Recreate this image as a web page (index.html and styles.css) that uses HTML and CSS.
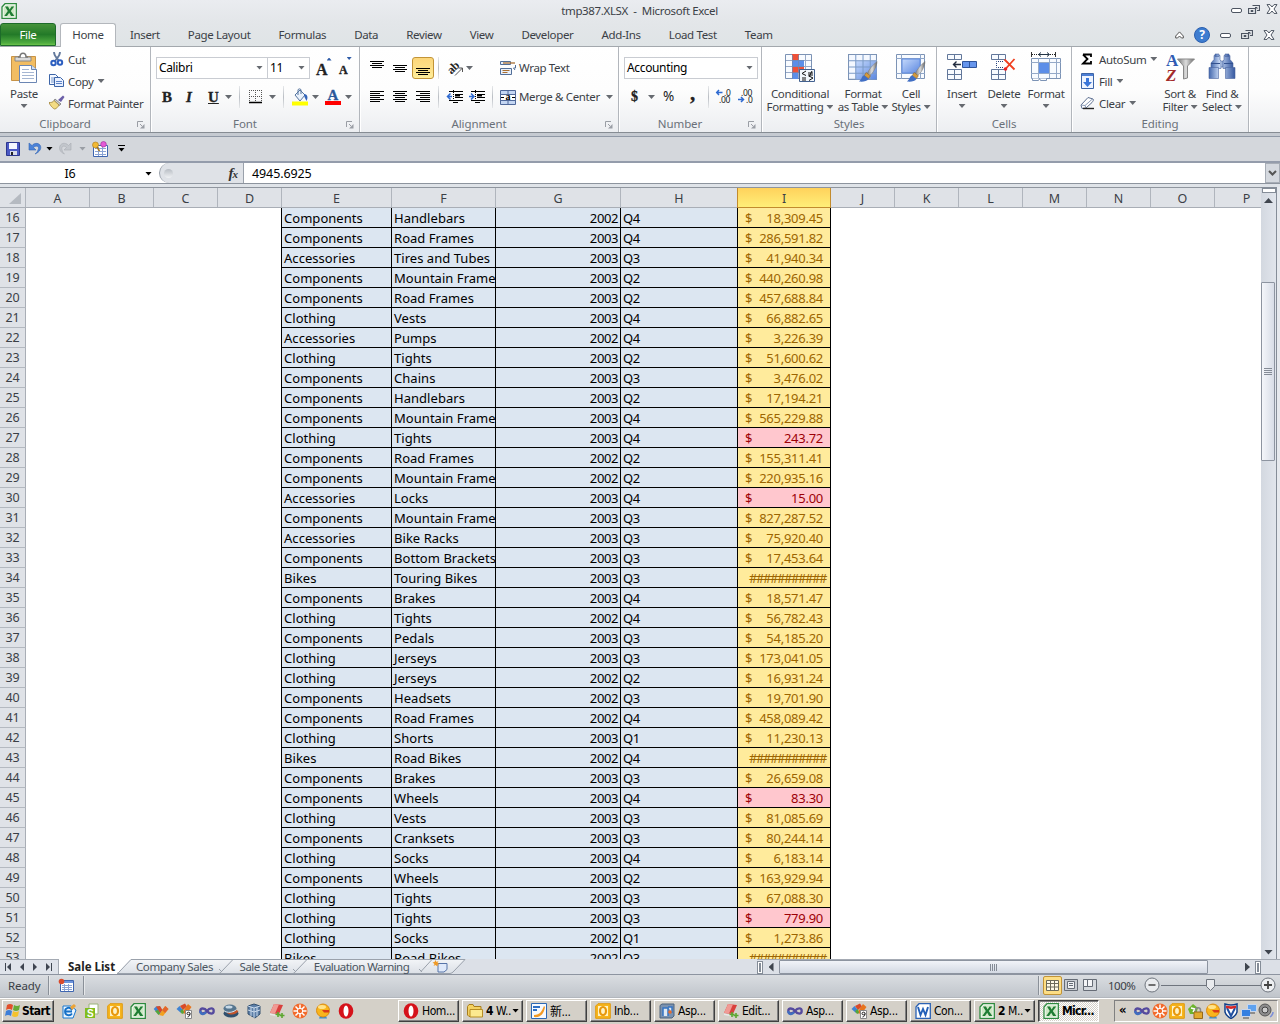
FILE: index.html
```html
<!DOCTYPE html>
<html lang="en">
<head>
<meta charset="utf-8">
<title>tmp387.XLSX - Microsoft Excel</title>
<link rel="stylesheet" href="styles.css">
</head>
<body>
<svg class="defs" width="0" height="0">
  <defs>
    <linearGradient id="blu" x1="0" y1="0" x2="1" y2="1"><stop offset="0" stop-color="#c5d9fb"/><stop offset="1" stop-color="#5b87e0"/></linearGradient>
    <linearGradient id="bar" x1="0" y1="0" x2="1" y2="0"><stop offset="0" stop-color="#4468ad"/><stop offset=".4" stop-color="#c9daf6"/><stop offset="1" stop-color="#3558a0"/></linearGradient>
    <linearGradient id="gry" x1="0" y1="0" x2="1" y2="0"><stop offset="0" stop-color="#777"/><stop offset=".5" stop-color="#ddd"/><stop offset="1" stop-color="#666"/></linearGradient>
    <linearGradient id="tabg" x1="0" y1="0" x2="0" y2="1"><stop offset="0" stop-color="#f2f4f7"/><stop offset="1" stop-color="#dde1e7"/></linearGradient>
  </defs>
  <symbol id="xl" viewBox="0 0 16 16"><path d="M1 4 4 .7H15.3V15.3H1Z" fill="#fff" stroke="#2d8a3e" stroke-width="1.3"/><path d="M2.500 4.500 5 2.200h8.700v11.500H2.500Z" fill="#cfe8c6"/><path d="M4 3.500h3l1.600 3 2-3h2.600L9.800 8l3.500 5h-3.200L8.200 9.700 6 13H3.300L6.800 8Z" fill="#1f7d34"/></symbol>
  <symbol id="opera" viewBox="0 0 16 16"><ellipse cx="8" cy="8" rx="7.300" ry="7.700" fill="#d5121a"/><ellipse cx="8" cy="8" rx="2.500" ry="5.600" fill="#fff"/></symbol>
  <symbol id="outl" viewBox="0 0 16 16"><path d="M.7 3 3 .7h12.300v14.600H.7Z" fill="#f7b51c" stroke="#e09a10"/><path d="M3 3h10v10H3Z" fill="#fff3c4"/><ellipse cx="8" cy="8" rx="3" ry="4" fill="none" stroke="#e8980c" stroke-width="2.200"/></symbol>
  <symbol id="inf" viewBox="0 0 16 16"><path d="M8 8C5.500 4.500 1.300 4.800 1.300 8s4.200 3.500 6.700 0 6.700-3.500 6.700 0-4.200 3.500-6.700 0Z" fill="none" stroke="#554a9e" stroke-width="2.300"/><path d="M7 9.300c-2.500 3-5.700 1.700-5.700-1.300" fill="none" stroke="#3f6fc0" stroke-width="2.200"/></symbol>
  <symbol id="ribn" viewBox="0 0 16 16"><path d="M.7 6 3 3.500h4L9 8l-3 4Z" fill="#3f83d3"/><path d="m3 3.500 4-.5 2.500 4L7 10Z" fill="#d94a28"/><path d="m6 12 6-9 3.500 3L10 13Z" fill="#f2a01e"/><path d="m9 7 3.500-4L15.500 6 12 10Z" fill="#e2652c"/><path d="m2 8 3-1 2 3-1.500 2Z" fill="#57a639"/></symbol>
  <symbol id="rib9" viewBox="0 0 16 16"><path d="m.5 6 3-3L7 7 5 10Z" fill="#3f83d3"/><path d="m4 3 5-2.500 2 3L7 7Z" fill="#d94a28"/><path d="m6 10 6-9 3.500 3-5 7Z" fill="#e8751e"/><path d="m4 8 3-2 1 4-2 1Z" fill="#57a639"/><path d="M9.500 7.500h6v8h-6Z" fill="#fff" stroke="#888"/><path d="M14 10.500a1.500 1.300 0 1 1-3 0 1.500 1.300 0 1 1 3 0c0 2-.5 3-2.500 3.500" fill="none" stroke="#222"/></symbol>
  <symbol id="sun" viewBox="0 0 16 16"><circle cx="8" cy="8" r="7.500" fill="#f26a2b"/><path d="M8 1.500v13M1.500 8h13M3.500 3.500l9 9M12.500 3.500l-9 9" stroke="#fff" stroke-width="1.500"/><circle cx="8" cy="8" r="2.700" fill="#f26a2b" stroke="#fff"/></symbol>
  <symbol id="bird" viewBox="0 0 16 16"><path d="m5 13-1 2.500h8L11 13Z" fill="#3a8ed0"/><circle cx="8" cy="7.500" r="6.500" fill="#f9b51c" stroke="#dd8c10"/><ellipse cx="7" cy="4" rx="4" ry="2" fill="#ffe38a"/><path d="M7 7h7v2.500H9Z" fill="#da3a17"/></symbol>
  <symbol id="edit" viewBox="0 0 16 16"><path d="m5 1 9 1-4 9-9-1Z" fill="#d9403d"/><path d="m5 1 5 .5-4 9-5-.5Z" fill="#f09a94"/><path d="M1 10.500 9 12v1.500L1 12Z" fill="#e8e8e8"/><path d="M9 9v5M6.500 11.500h5M13 10v5M10.500 12.500h5" stroke="#5ba72f" stroke-width="1.600"/></symbol>
  <symbol id="tabl" viewBox="0 0 28 28"><path d="M.5.500h27v24H.5Z" fill="#f4f8ff" stroke="#7c93b5"/><path d="M7.500 6.500h20v18h-20Z" fill="url(#blu)"/><path d="M7.500.500v24M14.500.500v24M21.500.500v24M.5 6.500h27M.5 12.500h27M.5 18.500h27" stroke="#7c9bc8" fill="none"/></symbol>
  <symbol id="brush" viewBox="0 0 20 22"><path d="M19.500.500c-4 3-9 9-10.500 13l2.500 2c4-3 7.500-9 8-15Z" fill="url(#gry)" stroke="#777" stroke-width=".5"/><path d="m8 12 4.500 3.500-2 3L6 15.500Z" fill="#d39a3e" stroke="#885c1d" stroke-width=".5"/><path d="M6 15c-3 1-2 4-5.500 6.500 4 .5 8.500 0 10-3Z" fill="#416fc4"/></symbol>
  <symbol id="launch" viewBox="0 0 8 8"><path d="M.5 6V.5H6M3 3l2 2" fill="none" stroke="#9a9ea5"/><path d="M7.500 3v4.500H3Z" fill="#9a9ea5"/></symbol>
  <symbol id="restore" viewBox="0 0 12 11"><path d="M4.500 1.500h7v5H9M.5 4.500h7v5h-7Z" fill="none" stroke="#4d5562" stroke-width="1.200"/><path d="M3 6.500h2v1H3ZM7 3.500h2v1.500" fill="none" stroke="#4d5562"/></symbol>
  <symbol id="close" viewBox="0 0 12 10"><path d="m1 .6h3L6 3l2-2.400h3L8 5l3 4.400H8L6 7 4 9.400H1L4 5Z" fill="#fff" stroke="#4d5562"/></symbol>
</svg>

<header class="title">
  <svg class="app" width="16" height="16"><use href="#xl"/></svg>
  <span class="doc">tmp387.XLSX&nbsp; -&nbsp; Microsoft Excel</span>
  <span class="winbtns"><i class="mini"></i><svg width="12" height="11"><use href="#restore"/></svg><svg width="12" height="10"><use href="#close"/></svg></span>
</header>
<nav class="tabs">
  <b class="file">File</b><b class="home">Home</b>
  <span>Insert</span><span>Page Layout</span><span>Formulas</span><span>Data</span><span>Review</span><span>View</span><span>Developer</span><span>Add-Ins</span><span>Load Test</span><span>Team</span>
  <div class="tabtools"><svg width="9" height="8"><path d="M.7 5 4.500.9 8.300 5v2H6.500L4.500 5 2.500 7H.7Z" fill="#fff" stroke="#555"/></svg><em>?</em><i class="mini"></i><svg width="12" height="11"><use href="#restore"/></svg><svg width="12" height="10"><use href="#close"/></svg></div>
</nav>

<section class="ribbon">
  <div class="group g-clip">
    <div class="body">
      <div class="big"><svg width="28" height="32"><path d="M1.500 4.500h24v24h-24Z" fill="#f2bd62" stroke="#c79347"/><path d="M5 5h16v4H5Z" fill="#d9d9d9" stroke="#888"/><path d="M8 5h2c0-5 6-5 6 0h2" fill="#fff" stroke="#777" stroke-width="1.500"/><path d="M9.500 13.500h12l5 4v13h-17Z" fill="#fff" stroke="#6b86b3"/><path d="M21.500 13.500v4h5" fill="#cfe0f8" stroke="#6b86b3"/><path d="M12 17.500h7M12 20.500h12M12 23.500h12M12 26.500h12" stroke="#a5b6d2"/></svg><span>Paste</span><i class="car"></i></div>
      <div class="list">
        <p><svg width="16" height="16"><path d="M5 1c0 4 3 6 5 9M11 1c0 4-3 6-5 9" fill="none" stroke="#63799c" stroke-width="1.800"/><circle cx="4.500" cy="12" r="2.200" fill="#fff" stroke="#2d5fc0" stroke-width="2"/><circle cx="11" cy="11.500" r="2.200" fill="#fff" stroke="#2d5fc0" stroke-width="2"/></svg>Cut</p>
        <p><svg width="16" height="16"><path d="M.5 1.500h6l3 3v7h-9Z" fill="#f4f8ff" stroke="#3d65a8"/><path d="M2 5h5M2 7h5M2 9h5" stroke="#7797cc"/><path d="M5.500 4.500h6l3 3v6h-9Z" fill="#e8f0ff" stroke="#3d65a8"/><path d="M7 8.500h6M7 10.500h6" stroke="#5d83c6"/></svg>Copy<i class="car"></i></p>
        <p><svg width="16" height="16"><path d="m9 5 5-4.500 1.500 1.500L12 7Z" fill="#6b5fa8"/><path d="m6 4 6 5-2 1.500-5-5Z" fill="#ccc" stroke="#666" stroke-width=".7"/><path d="M5 5.500c-1 2-3 2-5 2 2 5 6 7 6 6.500 2-1 3-2 4-4Z" fill="#f3dc84" stroke="#9f8337" stroke-width=".8"/></svg>Format Painter</p>
      </div>
    </div>
    <footer><span>Clipboard</span><svg width="8" height="8"><use href="#launch"/></svg></footer>
  </div>

  <div class="group g-font">
    <div class="body col">
      <div class="row r1"><span class="combo">Calibri<i class="car"></i></span><span class="combo">11<i class="car"></i></span><b class="serif up">A<i></i></b><b class="serif dn">A<i></i></b></div>
      <div class="row r2"><b class="serif">B</b><b class="serif it">I</b><b class="serif un">U</b><i class="car"></i><i class="vs"></i>
        <svg width="14" height="14"><path d="M.5 0v12M6.500 0v12M12.500 0v12M0 .5h13M0 6.500h13" stroke="#555" stroke-dasharray="1 1"/><path d="M0 12.500h13" stroke="#000" stroke-width="1.500"/></svg><i class="car"></i><i class="vs"></i>
        <svg width="17" height="17"><path d="M3 6 8 1l5 5-5 6Z" fill="#e9f1fb" stroke="#55749f"/><path d="M6 6V1c0-1.500 3-1.500 3 0v4" fill="none" stroke="#55749f"/><path d="M12 5c4 0 4 4 2.500 7l-2-4Z" fill="#3163b9"/><path d="M0 12.500h16v4H0Z" fill="#ff0"/></svg><i class="car"></i>
        <b class="serif fc">A</b><i class="car"></i></div>
    </div>
    <footer><span>Font</span><svg width="8" height="8"><use href="#launch"/></svg></footer>
  </div>

  <div class="group g-align">
    <div class="body col">
      <div class="row r1">
        <svg width="14" height="22"><path d="M0 4.500h14M2 6.500h10M0 8.500h14M2 10.500h10" stroke="#000"/></svg>
        <svg width="14" height="22"><path d="M0 8.500h14M2 10.500h10M0 12.500h14M2 14.500h10" stroke="#000"/></svg>
        <span class="on"><svg width="14" height="20"><path d="M0 10.500h14M2 12.500h10M0 14.500h14M2 16.500h10" stroke="#000"/></svg></span>
        <i class="vs"></i>
        <svg width="16" height="16"><text x="0" y="12" transform="rotate(-45 5 9)" font-family="Liberation Serif,serif" font-weight="bold" font-size="12" fill="#222">ab</text><path d="m7 15.500 7.500-7.500m-4 0h4v4" fill="none" stroke="#555"/></svg><i class="car"></i><i class="vs gone"></i>
        <svg width="17" height="16"><path d="M.5 1.500h10v3H.5ZM.5 8.500h11v6H.5Z" fill="#e9f0fa" stroke="#526f99"/><path d="M3 3h12" stroke="#a86f32" stroke-width="1.300"/><path d="M2.500 10.500h7M2.500 12.500h5" stroke="#a86f32"/><path d="M15.500 5v3h-2l1.500 2" fill="none" stroke="#526f99"/></svg><span>Wrap Text</span>
      </div>
      <div class="row r2">
        <svg width="14" height="12"><path d="M0 .5h14M0 2.500h10M0 4.500h14M0 6.500h10M0 8.500h14M0 10.500h10" stroke="#000"/></svg>
        <svg width="14" height="12"><path d="M0 .5h14M2 2.500h10M0 4.500h14M2 6.500h10M0 8.500h14M2 10.500h10" stroke="#000"/></svg>
        <svg width="14" height="12"><path d="M0 .5h14M4 2.500h10M0 4.500h14M4 6.500h10M0 8.500h14M4 10.500h10" stroke="#000"/></svg>
        <i class="vs"></i>
        <svg width="16" height="14"><path d="M2 1.500h14M8 4.500h8M8 7.500h8M2 10.500h14M6 12.500h5" stroke="#000"/><path d="M8 5.500h5" stroke="#000" stroke-width="2"/><path d="M6.500 0v14" stroke="#000" stroke-dasharray="1 1"/><path d="M5 6.500H1M3.500 3.500l-3 3 3 3" fill="none" stroke="#2e6ad1" stroke-width="1.500"/></svg>
        <svg width="16" height="14"><path d="M2 1.500h14M8 4.500h8M8 7.500h8M2 10.500h14M6 12.500h5" stroke="#000"/><path d="M8 5.500h5" stroke="#000" stroke-width="2"/><path d="M6.500 0v14" stroke="#000" stroke-dasharray="1 1"/><path d="M0 6.500h4M2 3.500l3 3-3 3" fill="none" stroke="#2e6ad1" stroke-width="1.500"/></svg>
        <i class="vs"></i>
        <svg width="17" height="15"><path d="M.5.500h15v14H.5Z" fill="#c5d7f3" stroke="#50699a"/><path d="M0 4.500h16M0 10.500h16M8 0v4M8 11v4" stroke="#50699a"/><path d="M1 5h14v5H1Z" fill="#fff"/><text x="5.500" y="10" font-family="Liberation Serif,serif" font-weight="bold" font-size="10">a</text><path d="M1 7.500h3M12 7.500h3" stroke="#000"/></svg><span>Merge &amp; Center</span><i class="car"></i>
      </div>
    </div>
    <footer><span>Alignment</span><svg width="8" height="8"><use href="#launch"/></svg></footer>
  </div>

  <div class="group g-num">
    <div class="body col">
      <div class="row r1"><span class="combo">Accounting<i class="car"></i></span></div>
      <div class="row r2"><b class="serif sm">$</b><i class="car"></i><span class="pct">%</span><b class="serif comma">,</b><i class="vs"></i>
        <svg width="17" height="16"><g font-family="Noto Sans,sans-serif" font-size="8.500" fill="#222"><text x="8" y="7">.0</text><text x="3" y="14">.00</text></g><path d="M6.500 3.500H1M3 1 .7 3.500 3 6" fill="none" stroke="#2e6ad1" stroke-width="1.500"/></svg>
        <svg width="17" height="16"><g font-family="Noto Sans,sans-serif" font-size="8.500" fill="#222"><text x="3" y="7">.00</text><text x="8" y="14">.0</text></g><path d="M0 10.500h5M3 8l2.500 2.500L3 13" fill="none" stroke="#2e6ad1" stroke-width="1.500"/></svg></div>
    </div>
    <footer><span>Number</span><svg width="8" height="8"><use href="#launch"/></svg></footer>
  </div>

  <div class="group g-sty">
    <div class="body">
      <div class="big"><svg width="30" height="32"><path d="M.5 2.500h26v24H.5Z" fill="#f8fbff" stroke="#7c93b5"/><path d="M7 2h7v6H7ZM7 15h12v6H7Z" fill="#ee5138"/><path d="M7 8h12v7H7ZM7 21h6v6H7Z" fill="#5c8ee8"/><path d="M7.500 3v24M13.500 3v24M20.500 3v24M0 8.500h27M0 14.500h27M0 20.500h27" stroke="#7189b0" opacity=".7"/><path d="M14.500 17.500h15v12h-15Z" fill="#f2f7fd" stroke="#43618f"/><path d="m21 19-4 2.500 4 2M17 26h4M17 28h4M23 21h5M23 23h5M27 19l-3 6M24 24l4 2-4 2.500" fill="none" stroke="#111"/></svg><span>Conditional</span><span>Formatting<i class="car"></i></span></div>
      <div class="big"><svg width="30" height="32"><svg y="2" width="29" height="29"><use href="#tabl"/></svg><svg x="10" y="9" width="20" height="21"><use href="#brush"/></svg></svg><span>Format</span><span>as Table<i class="car"></i></span></div>
      <div class="big"><svg width="30" height="32"><path d="M.5 2.500h28v24H.5Z" fill="#f8fbff" stroke="#7c93b5"/><path d="M5.500 2v25M24.500 2v25M0 6.500h29M0 21.500h29" stroke="#8fa6c8"/><path d="M6 7h18v14H6Z" fill="url(#blu)" stroke="#5f8be0"/><svg x="10" y="9" width="20" height="21"><use href="#brush"/></svg></svg><span>Cell</span><span>Styles<i class="car"></i></span></div>
    </div>
    <footer><span>Styles</span></footer>
  </div>

  <div class="group g-cell">
    <div class="body">
      <div class="big"><svg width="30" height="32"><path d="M.5 2.500h14v5H.5ZM7.500 2v5M.5 17.500h14v10H.5ZM7.500 17v10M.5 22.500h14" fill="#f8fbff" stroke="#62779a"/><path d="M15.500 9.500h14v6h-14ZM22.500 9v6" fill="#6695ec" stroke="#2f549b"/><path d="M14 12.500H7M9.500 9.500 6.500 12.500l3 3" fill="none" stroke="#222c3f" stroke-width="1.400"/></svg><span>Insert</span><i class="car"></i></div>
      <div class="big"><svg width="26" height="32"><path d="M.5 2.500h14v5H.5ZM7.500 2v5M.5 17.500h14v10H.5ZM7.500 17v10M.5 22.500h14" fill="#f8fbff" stroke="#62779a"/><path d="M12 9.500H5.500v6H12" fill="none" stroke="#223f7a" stroke-dasharray="1 1"/><path d="m13.500 7.500 10 10M23.500 7 14 17.500" stroke="#f04020" stroke-width="1.800"/><circle cx="14.500" cy="17" r="1.800" fill="#e22"/></svg><span>Delete</span><i class="car"></i></div>
      <div class="big"><svg width="31" height="32"><path d="M.5 0v5M24.500 0v5" stroke="#333"/><path d="M1 2.500h24" stroke="#222" stroke-dasharray="1 1"/><path d="M8 2.500h10M10 .5 7.500 2.500 10 4.500M16 .5l2.500 2-2.500 2" fill="none" stroke="#234"/><path d="M.5 6.500h29v20H.5Z" fill="#f8fbff" stroke="#7c93b5"/><path d="M8 11h10v11H8Z" fill="#5c8ee8"/><path d="M7.500 6v20M18.500 6v20M25.500 6v20M0 10.500h30M0 21.500h30" stroke="#94a9c8"/><path d="M1.500 26.500v2h6l1-2 1 2h6v-2" fill="#fff" stroke="#7c93b5"/></svg><span>Format</span><i class="car"></i></div>
    </div>
    <footer><span>Cells</span></footer>
  </div>

  <div class="group g-edit">
    <div class="body">
      <div class="list">
        <p><svg width="15" height="14"><path d="M3 2.500h8v2.500M3 2.500 7.500 7 3 11.500h8V9" fill="none" stroke="#000" stroke-width="1.800"/></svg>AutoSum<i class="car"></i></p>
        <p><svg width="15" height="16"><path d="M1.500.500h12v15h-12Z" fill="#eef4ff" stroke="#3d65a8"/><path d="M2 1h11v2H2Z" fill="#4d7fd4"/><path d="M6 5h3v4h3l-4.500 5L3 9h3Z" fill="#3a75d8"/></svg>Fill<i class="car"></i></p>
        <p><svg width="15" height="14"><path d="m1 9 7-7.500 5 1.500c1 1 0 2-1 3.500L6 12l-4 .5Z" fill="#fff" stroke="#5d6f8f"/><path d="m1 9 4 .5 8-7M5 9.500 6 12" fill="none" stroke="#8a9bb8"/><path d="M3 12.500h11" stroke="#222" stroke-width="1.400"/></svg>Clear<i class="car"></i></p>
      </div>
      <div class="big"><svg width="30" height="32"><path d="M12.500 7h17l-7 7v12l-4 1V14Z" fill="url(#gry)" stroke="#888"/><g font-family="Liberation Serif,serif" font-weight="bold"><text x="1" y="14" font-size="17" fill="#2f5bb3">A</text><text x="1" y="29" font-size="17" font-style="italic" fill="#a32b2b">Z</text></g></svg><span>Sort &amp;</span><span>Filter<i class="car"></i></span></div>
      <div class="big"><svg width="28" height="32"><g fill="url(#bar)" stroke="#4a64a0" stroke-width=".6"><path d="M12 9h4v6h-4Z"/><path d="M6 3.500h6v4l1 2v7H3V11l3-3.500ZM22 3.500h-6v4l-1 2v7h10V11l-3-3.500Z"/><path d="M1 15.500h9.500v11H1ZM17.500 15.500H27v11h-9.500Z"/><path d="M7 2h4v2.500H7ZM17 2h4v2.500h-4Z"/></g><path d="M3 11.500h9M16 11.500h9" stroke="#34528f"/></svg><span>Find &amp;</span><span>Select<i class="car"></i></span></div>
    </div>
    <footer><span>Editing</span></footer>
  </div>
</section>

<div class="qat">
  <svg width="14" height="14"><path d="M.5.500h13v13H.5Z" fill="#4b59c4" stroke="#2c378e"/><path d="M3 1h8v6H3Z" fill="#f4f7ff"/><path d="M4 9h7v4H4Z" fill="#d7dbea"/><path d="M5 10h2v3H5Z" fill="#222"/></svg>
  <svg width="14" height="13"><path d="M1 1v7h7L5.500 5.500C8 3 12 4 10 8c-.5 2-2 3-3 4 5-2 7-6 5-9-2-2.500-6-2-8 .5Z" fill="#4b82d8" stroke="#3566b4" stroke-width=".6"/></svg><i class="car blk"></i>
  <svg width="14" height="13"><path d="M12 1v7H5l2.500-2.500C5 3 2 4 3 8c.5 2 1.500 3 2.500 4-5-2-6-6-4-9 2-2.500 6-2 8 .5Z" fill="#c2c6cc" stroke="#a9adb3" stroke-width=".6"/></svg><i class="car dim"></i>
  <svg width="17" height="16"><path d="M1.500 4.500h14v11h-14Z" fill="#fff" stroke="#3f66b0"/><path d="M3 7.500h11M3 10.500h11M3 13.500h11M6.500 6v9M10.500 6v9" stroke="#8ba4d4"/><circle cx="3.500" cy="4" r="3" fill="#f2b933" stroke="#a9781b" stroke-width=".6"/><path d="m5 6 2.500 4" stroke="#a9781b" stroke-width="1.500"/><circle cx="11.500" cy="3.300" r="2.800" fill="#e45ad6" stroke="#9b2b92" stroke-width=".6"/></svg>
  <svg width="8" height="7"><path d="M0 .5h7" stroke="#000"/><path d="M.5 3h6l-3 3.500Z" fill="#000"/></svg>
</div>

<div class="fbar">
  <div class="name"><span>I6</span><i class="car blk"></i></div>
  <div class="fx"><i class="knob"></i><b>f<small>x</small></b></div>
  <div class="val">4945.6925</div>
  <div class="exp"><svg width="9" height="6"><path d="m1 1 3.500 3.500L8 1" fill="none" stroke="#555" stroke-width="2"/></svg></div>
</div>

<main class="book">
  <div class="sheet">
    <div class="heads" id="heads"></div>
    <div class="rows" id="rows"></div>
  </div>
  <div class="vscroll">
    <i class="split"></i><i class="tri u"></i><i class="thumb"><i></i></i><i class="tri d"></i>
  </div>
  <div class="edge"></div>
</main>

<div class="sheettabs">
  <div class="navs"><svg width="58" height="14"><g fill="#3e4550"><path d="M5 3h1v8H5ZM11 3v8L7 7ZM24 3v8l-4-4ZM33 3v8l4-4ZM46 3v8l4-4ZM51 3h1v8h-1Z"/></g></svg></div>
  <b>Sale List</b>
  <svg width="14" height="15"><path d="M0 0h14L1 14H0Z" fill="#fff"/><path d="M14 0 3 12q-2 2-3 2h14Z" fill="url(#tabg)"/><path d="M14 .5 3 12q-2 2.500-3 2.500h14" fill="none" stroke="#9aa1ab"/></svg>
  <span class="t1">Company Sales</span>
  <svg width="14" height="15"><path d="M0 0h14v15H0Z" fill="url(#tabg)"/><path d="M0 .5h14L3 12q-2 2.500-3 2.500h14M0 10l3 3" fill="none" stroke="#9aa1ab"/></svg>
  <span class="t2">Sale State</span>
  <svg width="14" height="15"><path d="M0 0h14v15H0Z" fill="url(#tabg)"/><path d="M0 .5h14L3 12q-2 2.500-3 2.500h14M0 10l3 3" fill="none" stroke="#9aa1ab"/></svg>
  <span class="t3">Evaluation Warning</span>
  <svg width="47" height="15"><path d="M0 0h46L33 14H0Z" fill="url(#tabg)"/><path d="M0 .5h46L35 12q-2 2.500-4 2.500H0M13 .5 2 12.500M0 10l3 3" fill="none" stroke="#9aa1ab"/><path d="M19 4.500h9v6l-3 2.500h-6Z" fill="#dfe9fa" stroke="#5774a8"/><path d="m16.500 1 1 2 2-1-1 2 2 1-2 .5 0 2-2-1.500-2 1 1-2-2-1.500 2-.5Z" fill="#ef9a26"/></svg>
  <div class="hscroll"><i class="hs"></i><i class="tri l"></i><i class="thumb"><i></i></i><i class="tri r"></i><i class="hs"></i></div>
</div>

<div class="status">
  <span class="rdy">Ready</span><i class="sv"></i>
  <svg width="16" height="14"><path d="M2.500 2.500h13v11h-13Z" fill="#fff" stroke="#3f66b0"/><path d="M3 3h12v2H3Z" fill="#6e94dc"/><path d="M4 7.500h10M4 9.500h10M4 11.500h10M6.500 6v7M10.500 6v7" stroke="#8ba4d4"/><circle cx="3.500" cy="3.500" r="2.800" fill="#d94a2c"/></svg><i class="sv"></i>
  <div class="right"><i class="sv"></i>
    <span class="von"><svg width="13" height="11"><path d="M.5.500h12v10H.5ZM4.500.500v10M8.500.500v10M.5 3.500h12M.5 7h12" fill="#fffbe8" stroke="#6c6a5a"/></svg></span>
    <svg width="14" height="12"><path d="M.5.500h13v11H.5Z" fill="#c7cbd1" stroke="#666c76"/><path d="M3.500 2.500h7v7h-7ZM5 4.500h4M5 6.500h4" fill="#eef0f3" stroke="#666c76"/></svg>
    <svg width="14" height="12"><path d="M.5.500h13v11H.5Z" fill="#d5d9de" stroke="#666c76"/><path d="M.5.500h4v7h-4ZM4.500.500h5v7h-5Z" fill="#f4f5f7" stroke="#666c76"/></svg>
    <span class="zoom">100%</span>
    <svg width="126" height="18"><g fill="#e9ebee" stroke="#6f757e"><path d="M17 9.500h100" fill="none"/><circle cx="8" cy="9" r="7"/><path d="M62.500 3.500h8v7l-4 4-4-4Z"/></g><path d="M4.500 9h7" stroke="#444" stroke-width="1.500"/></svg>
    <svg class="plus" width="16" height="18"><circle cx="8" cy="9" r="7" fill="#eceef1" stroke="#6f757e"/><path d="M4 9h8M8 5v8" stroke="#444" stroke-width="1.800"/></svg>
  </div>
</div>

<div class="task">
  <b class="start"><svg width="16" height="15"><path d="M2 2q3-2 6 0L7 7Q4 5 1 7Z" fill="#e2502b"/><path d="M9 2q3 2 6 0l-1 5q-3 2-6 0Z" fill="#67ab36"/><path d="M1 8q3-2 6 0l-1 5Q3 11 0 13Z" fill="#3e7fd8"/><path d="M8 8q3 2 6 0l-1 5q-3 2-6 0Z" fill="#f5c22d"/></svg>Start</b>
  <div class="quick">
    <svg viewBox="0 0 16 16"><path d="M2 3h8l5 4-3 8H2Z" fill="#eaf5ff" stroke="#1878d0"/><path d="M11 7c-2-4-7-2-7 1.500 0 4 5 5 7 2M5 8.500h6" fill="none" stroke="#1470c8" stroke-width="1.800"/><path d="m9 4 4-3 2 2-4 4Z" fill="#eba336"/></svg>
    <svg viewBox="0 0 16 16"><path d="M5 1h9v10H5Z" fill="#fff" stroke="#9ab37a"/><path d="M1 5h10v10H1Z" fill="#82bd1e"/><text x="3" y="14" font-size="10" font-weight="bold" font-family="Liberation Sans,sans-serif" fill="#fff">S</text></svg>
    <svg><use href="#outl"/></svg><svg><use href="#xl"/></svg><svg><use href="#ribn"/></svg><svg><use href="#rib9"/></svg><svg><use href="#inf"/></svg>
    <svg viewBox="0 0 16 16"><ellipse cx="8" cy="10.500" rx="7.500" ry="4" fill="#31506e"/><ellipse cx="7" cy="5.500" rx="6.500" ry="4" fill="#56768f"/><ellipse cx="6" cy="4" rx="3.500" ry="1.500" fill="#c8dae8"/><path d="M3 9c4 2 8 0 10-2l2.500 1c-2 4-9 5-12.500 1Z" fill="#c4552c"/><path d="M2 8.500c5 2 9 0 11-1.500" stroke="#dfe9f2" fill="none"/></svg>
    <svg viewBox="0 0 16 16"><path d="m2 3 6-2 6 2v8l-5 4-7-4Z" fill="#5c7fa8" stroke="#34506f"/><path d="m2 3 6 2 6-2M8 5v10M5 4v9M11 4v9M2 7l6 2 6-2" fill="none" stroke="#c8d9ea"/></svg>
    <svg><use href="#edit"/></svg><svg><use href="#sun"/></svg><svg><use href="#bird"/></svg><svg><use href="#opera"/></svg>
  </div>
  <div class="apps">
    <span><svg><use href="#opera"/></svg>Hom...</span>
    <span><svg viewBox="0 0 16 16"><path d="M.5 3.500 2 1.500h4l1 2h7v10H2L.5 12Z" fill="#f4d262" stroke="#a87d1b"/><path d="M3 6.500h12.500v7.500H3Z" fill="#fce98f" stroke="#b78d22"/></svg><b>4</b>&nbsp;W..<i class="car blk"></i></span>
    <span class="cjk"><svg viewBox="0 0 16 16"><path d="M.5.500h15v15H.5Z" fill="#f6faff" stroke="#2c68b4"/><path d="M3 12c6 0 8-4 10-9l1 1c-1 7-5 11-11 10Z" fill="#f39a24"/><path d="M2 4h7M2 7h4" stroke="#2d6fc5" stroke-width="2"/></svg>新...</span>
    <span><svg><use href="#outl"/></svg>Inb...</span>
    <span><svg viewBox="0 0 16 16"><path d="M1 2.500 3 1h12v12l-2 2H1Z" fill="#7a92b0" stroke="#4c627d"/><path d="M4 13V5h5v8M9 4h4v6" fill="#dfe8f2" stroke="#3574c4" stroke-width="1.500"/><circle cx="11" cy="9" r="1.800" fill="#e76b2a"/></svg>Asp...</span>
    <span><svg><use href="#edit"/></svg>Edit...</span>
    <span><svg><use href="#inf"/></svg>Asp...</span>
    <span><svg><use href="#rib9"/></svg>Asp...</span>
    <span><svg viewBox="0 0 16 16"><path d="M1 4 4 .7H15.300V15.300H1Z" fill="#fff" stroke="#2b62b4" stroke-width="1.300"/><path d="m3 4 2.500 8L8 6l2.500 6L13 4" fill="none" stroke="#2360b8" stroke-width="1.900"/></svg>Con...</span>
    <span><svg><use href="#xl"/></svg><b>2</b>&nbsp;M..<i class="car blk"></i></span>
    <span class="act"><svg><use href="#xl"/></svg>Micr...</span>
  </div>
  <div class="tray"><b>«</b>
    <svg><use href="#inf"/></svg><svg><use href="#sun"/></svg><svg><use href="#outl"/></svg>
    <svg viewBox="0 0 16 16"><path d="M1 6 6 1l5 4-2 6H3Z" fill="#6cb52d"/><path d="m4 5 4 1-2 3" fill="none" stroke="#fff" stroke-width="1.500"/><path d="M8.500 9V7c0-3 5-3 5 0v2" fill="none" stroke="#888" stroke-width="1.500"/><path d="M7 9h8.500v6.500H7Z" fill="#e2a92d" stroke="#96681a"/></svg>
    <svg><use href="#bird"/></svg>
    <svg viewBox="0 0 16 16"><path d="M2 1q6 2 12 0v8q-1 4-6 6.500Q3 13 2 9Z" fill="#fff" stroke="#12408a" stroke-width="1.500"/><path d="m4 5 4 8 4-8" fill="none" stroke="#1f4fa0" stroke-width="2"/><path d="M3 2.500q5 1.500 10 0v2.500L8 6 3 5Z" fill="#d62828"/></svg>
    <svg viewBox="0 0 16 16"><path d="M6.500 1.500h9v7h-9Z" fill="#5fa2ef" stroke="#c9d6ea"/><path d="M.5 6.500h9v7h-9Z" fill="#347fe0" stroke="#c9d6ea"/><path d="M2 15h6M9 10h5" stroke="#777" stroke-width="1.500"/></svg>
    <svg viewBox="0 0 16 16"><circle cx="7" cy="7" r="6" fill="#8d8d8d" stroke="#555"/><circle cx="7" cy="7" r="3" fill="#ccc" stroke="#444"/><path d="M12 14q3-2 3-5" fill="none" stroke="#7c8fd8" stroke-width="1.500"/></svg>
  </div>
</div>
<script src="script.js"></script>
</body>
</html>
```
FILE: styles.css
```css
*{box-sizing:border-box}
body{margin:0;width:1280px;height:1024px;overflow:hidden;background:#dfe3e8;font-family:"Noto Sans",sans-serif;font-size:11.5px;letter-spacing:-.35px;color:#3b3f46;display:flex;flex-direction:column;white-space:nowrap}
i,em{font-style:normal}
svg{display:block;flex:none}
.defs{position:absolute}
.car{display:inline-block;width:7px;height:4px;flex:none;background:#666a70;clip-path:polygon(0 0,100% 0,50% 100%)}
.car.blk{background:#000}
.car.dim{background:#9a9ea5}

.title{height:23px;flex:none;display:grid;grid-template-columns:100px 1fr 100px;background:linear-gradient(#eaecf0,#e3e6e9)}
.title .app{margin:3px 0 0 1px}
.title .doc{text-align:center;line-height:22px;padding-right:1px}
.winbtns{display:flex;gap:6px;justify-content:flex-end;padding:4px 2px 0 0}
.mini{width:11px;height:5px;border:1px solid #4d5562;border-radius:2px;background:#fff;margin-top:4px}

.tabs{height:24px;flex:none;display:flex;background:linear-gradient(#e3e6e9,#dfe4e6);border-bottom:1px solid #a3a8ad;line-height:24px}
.tabs b{font-weight:400;text-align:center}
.file{width:56px;height:23px;margin-right:4px;color:#fff;background:linear-gradient(#45933a,#237a28 50%,#4eab3f 90%,#6cc24a);border:1px solid #1d6b2a;border-radius:3px 3px 0 0;line-height:22px}
.home{width:56px;height:24px;background:#fff;border:1px solid #b3b7bc;border-bottom:0;border-radius:3px 3px 0 0;line-height:22px;margin-right:14px}
.tabs span{margin-right:28px}
.tabtools{margin-left:auto;display:flex;align-items:center;gap:10px;padding-right:5px}
.tabtools em{width:16px;height:16px;border-radius:8px;background:#3e7dd0;border:1px solid #2b5fae;color:#fff;font-weight:700;font-size:12px;line-height:14px;text-align:center;letter-spacing:0}
.tabtools .mini{margin-top:2px}

.ribbon{height:86px;flex:none;display:flex;background:linear-gradient(#fff,#fdfdfd 50%,#eceef1);border-bottom:1px solid #868c93}
.group{display:flex;flex-direction:column;border-right:1px solid #b2b6bc;box-shadow:1px 0 #fff;height:85px;flex:none}
.g-clip{width:151px}.g-font{width:209px}.g-align{width:259px}.g-num{width:143px}.g-sty{width:175px}.g-cell{width:135px}.g-edit{width:177px}
.body{display:flex;height:69px;padding-top:2px}
.body.col{flex-direction:column}
.group footer{height:16px;display:flex;text-align:center;line-height:16px;color:#6a7079;letter-spacing:-.1px}
.group footer span{flex:1}
.group footer svg{margin:5px 5px 0 7px}
.big{display:flex;flex-direction:column;align-items:center;line-height:13px}
.big>svg{margin:3px 0 3px}
.big>.car{margin-top:4px}
.big span .car{margin:0 0 2px 3px}
.g-clip .big{width:44px;margin-left:2px}
.g-clip .list{margin-left:3px}
.list p{margin:0;height:22px;display:flex;align-items:center;gap:4px;padding-bottom:2px}
.g-clip .list svg{margin-right:-1px}
.g-clip .list p:nth-child(3) {letter-spacing:-.4px}

.row{display:grid;justify-items:start;align-items:center}
.row>span:not(.on):not(.combo){padding-bottom:2px}
.row>svg{overflow:visible}
.r1{height:22px;margin-top:8px}
.r2{height:22px;margin-top:7px}
.combo{border:1px solid #c9ccd2;background:#fff;height:22px;width:100%;display:flex;justify-content:space-between;align-items:center;padding:0 4px 1px 2px;color:#000;font-size:12px}
.vs{width:1px;height:22px;background:linear-gradient(#e6e8ea,#babec4,#e6e8ea)}
.gone{visibility:hidden}
.serif{font-family:"Liberation Serif",serif;color:#222;font-size:15px;line-height:18px;letter-spacing:0;-webkit-text-stroke:.3px}
.it{font-style:italic}.un{text-decoration:underline}
.g-font .row{padding-left:5px}
.g-font .r1{grid-template-columns:112px 42px 6px 23px 20px}
.g-font .combo+.combo{margin-left:-1px;width:43px}
.up{grid-column:4;font-size:16px;position:relative;padding-top:3px}
.dn{font-size:12px;padding-top:4px;position:relative}
.up i,.dn i{position:absolute;right:-4px;top:0;width:5px;height:3px;background:#2f5ca8;clip-path:polygon(50% 0,100% 100%,0 100%)}
.dn i{clip-path:polygon(0 0,100% 0,50% 100%)}
.g-font .r2{padding-left:11px;grid-template-columns:24px 22px 17px 14px 10px 20px 14px 9px 20px 13px 20px 8px}
.fc{color:#2b579a;border-bottom:4px solid red;width:16px;height:16px;line-height:12px;text-align:center;font-size:15px}
.g-align .row{padding-left:10px}
.g-align .r1{grid-template-columns:23px 19px 26px 10px 18px 17px 17px 19px 90px}
.g-align .r2{grid-template-columns:23px 23px 22px 9px 22px 23px 8px 19px 87px 7px}
.g-align .r1 .vs.gone{height:1px}
.on{width:22px;height:22px;border:1px solid #c29437;border-radius:3px;background:linear-gradient(#fcd67a,#fde28b 60%,#ffef9b);display:flex;justify-content:center}
.g-num .row{padding-left:5px}
.g-num .r1{grid-template-columns:134px}
.g-num .r2{padding-left:12px;grid-template-columns:17px 15px 27px 18px 8px 22px 20px}
.sm{font-size:14px}.comma{font-size:21px;line-height:10px;padding-bottom:9px}
.pct{font-size:13.5px;color:#222}
.g-sty .big:nth-child(1){width:76px}.g-sty .big:nth-child(2){width:50px}.g-sty .big:nth-child(3){width:46px}
.g-cell .body{padding-left:4px}.g-cell .big{width:42px}
.g-edit .list{width:87px;padding-left:8px}
.g-edit .big{width:42px}

.qat{height:30px;flex:none;border-top:3px solid #c5cad1;border-bottom:2px solid #949cab;box-shadow:inset 0 1px #8f98a6;background:#d4d7dc;display:grid;align-items:center;grid-template-columns:22px 18px 13px 20px 13px 26px 20px;padding:1px 0 1px 6px}

.fbar{height:21px;flex:none;display:flex;background:#fff;border-bottom:1px solid #8d949e;font-size:12.500px;letter-spacing:-.1px;color:#000;line-height:21px}
.name{width:159px;display:grid;grid-template-columns:140px 13px;align-items:center;text-align:center;padding-left:5px;padding-right:1px}
.name span{padding-right:10px}
.fx{width:85px;background:#dfe2e7;border:1px solid #9aa1ab;border-width:0 1px 0 1px;border-radius:10px 0 0 10px;display:flex;justify-content:space-between;align-items:center;padding:0 6px 0 4px}
.knob{width:9px;height:9px;border-radius:5px;background:linear-gradient(#b8bdc4,#f0f2f4)}
.fx b{font:italic bold 15px "Liberation Serif",serif;color:#333;letter-spacing:-1px}
.fx small{font-size:11px}
.val{flex:1;padding-left:8px}
.exp{width:15px;background:#d5d9df;border:1px solid #a7adb6;display:flex;align-items:center;justify-content:center}

.book{height:775px;flex:none;display:flex;padding-top:3px}
.sheet{width:1261px;overflow:hidden;border-top:1px solid #8f959e;background:#fff}
.heads,.rows>div{display:grid;grid-template-columns:26px 64px 64px 64px 64px 110px 104px 125px 117px 93px 64px 64px 64px 64px 64px 64px 64px}
.heads{height:20px;background:#dfe2e7;border-bottom:1px solid #a9aeb6;font-size:12.500px;line-height:21px;text-align:center;letter-spacing:0}
.heads span{border-right:1px solid #b0b5bd;height:19px}
.heads .corner{display:flex;justify-content:flex-end;align-items:flex-end;padding:0 4px 3px 0}
.corner::after{content:"";width:12px;height:11px;background:#b5bac1;clip-path:polygon(100% 0,100% 100%,0 100%)}
.heads .sel{background:linear-gradient(#ffd25c,#ffee78);height:20px;border-right-color:#c28b2e;border-bottom:1px solid #c28b2e;box-shadow:-1px 0 #c28b2e}
.rows{font-size:13px;color:#000;letter-spacing:.04px;line-height:20px}
.rows>div{height:20px}
.rows span{overflow:hidden;padding:0 0 0 2px;height:20px}
.rows .n{background:#dfe2e7;border-right:1px solid #a9aeb6;border-bottom:1px solid #b4b9c0;text-align:center;font-size:12.500px;color:#3b3f46;padding:0;letter-spacing:-.1px}
.rows .c{background:#dce6f1;border-right:1px solid #000;border-bottom:1px solid #000}
.rows .e{grid-column:6;box-shadow:-1px 0 #000;overflow:visible}
.rows .y{text-align:right;padding-right:2px;letter-spacing:-.4px}
.rows .q{letter-spacing:-.4px}
.rows .v{background:#ffeb9c;color:#9c6500;display:flex;justify-content:space-between;padding:0 7px;letter-spacing:-.26px}
.rows .bad{background:#ffc7ce;color:#9c0006}
.rows .hash{justify-content:flex-end;padding-right:4px;padding-left:0;letter-spacing:-1.400px}
.vscroll{width:16px;display:grid;grid-template-rows:5px 15px 74px 179px 1fr 14px;justify-items:center;background:linear-gradient(90deg,#d3d8e0,#e1e5ec);border-right:1px solid #858d98;border-top:1px solid #858d98}
.split{width:14px;height:5px;border:1px solid #858d98;background:#fff}
.tri{background:#3f454e;align-self:center}
.u,.d{width:9px;height:5px}
.u{clip-path:polygon(50% 0,100% 100%,0 100%)}
.d{clip-path:polygon(0 0,100% 0,50% 100%);grid-row:6}
.thumb{border:1px solid #8d94a0;display:flex;align-items:center;justify-content:center;border-radius:1px}
.vscroll .thumb{grid-row:4;width:14px;justify-self:start;background:linear-gradient(90deg,#f4f6fa,#d8dde7)}
.vscroll .thumb i{width:8px;height:7px;background:repeating-linear-gradient(#848b96 0 1px,transparent 1px 2px)}
.edge{flex:1;background:#e6e9ee}

.sheettabs{height:16px;flex:none;display:flex;background:#dce0e7;border-bottom:1px solid #8d94a0;font-size:11.500px;line-height:14px;letter-spacing:-.4px;color:#4a5560}
.navs{width:59px;border-top:1px solid #a4aab3;border-right:1px solid #a4aab3;background:#dfe3ea}
.sheettabs b{width:58px;background:#fff;padding-left:9px;padding-top:1px;color:#222;font-size:11.500px;letter-spacing:0}
.sheettabs>span{background:linear-gradient(#f2f4f7,#dde1e7);border:1px solid #9aa1ab;border-width:1px 0;text-align:center;height:15px;line-height:13px}
.t1{width:88px;padding-right:1px}.t2{width:60px;padding-left:1px;letter-spacing:-.5px!important}.t3{width:112px;padding-right:3px;letter-spacing:-.55px}
.hscroll{margin-left:auto;width:523px;display:grid;grid-template-columns:7px 16px 428px 1fr 6px 19px;align-items:center;border-top:1px solid #a4aab3}
.hs{width:6px;height:13px;background:#fff;border:1px solid #858d98;box-shadow:inset 0 0 0 1px #fff,inset 3px 0 #858d98}
.l,.r{width:5px;height:9px}
.l{clip-path:polygon(100% 0,100% 100%,0 50%);justify-self:center;margin-right:2px}
.r{clip-path:polygon(0 0,100% 50%,0 100%);justify-self:end;margin-right:5px}
.hscroll .thumb{height:14px;margin-left:-1px;background:linear-gradient(#f1f3f8,#d3d9e3)}
.hscroll .thumb i{width:8px;height:7px;background:repeating-linear-gradient(90deg,#848b96 0 1px,transparent 1px 2px)}

.status{height:23px;flex:none;display:flex;align-items:center;background:linear-gradient(#dadde1,#c0c5cb);border-bottom:1px solid #b2b7bd;letter-spacing:0;padding-bottom:2px}
.rdy{width:48px;padding-left:8px;letter-spacing:-.1px}
.sv{width:2px;height:19px;background:#8a9098;border-right:1px solid #e6e8ea}
.status>svg{margin:0 9px 0 8px}
.right{margin-left:auto;display:flex;align-items:center;width:242px}
.von{width:19px;height:19px;border:1px solid #c29437;border-radius:2px;background:#fdde85;display:flex;align-items:center;justify-content:center;margin:0 2px 0 3px}
.right>svg:nth-of-type(2){margin-left:5px}
.zoom{width:36px;margin-left:11px;letter-spacing:-.5px}
.plus{margin-left:-10px}

.task{height:26px;flex:none;display:flex;background:#d4d0c8;border-top:1px solid #fff;padding:1px 2px 3px;font:12px "DejaVu Sans Condensed",sans-serif;letter-spacing:-.4px;color:#000;align-items:center}
.start,.apps span{height:22px;border:1px solid;border-color:#fff #404040 #404040 #fff;box-shadow:inset -1px -1px #808080;display:flex;align-items:center}
.start{width:52px;gap:1px;padding-left:2px;font-size:12px;letter-spacing:-.6px}
.quick{display:flex;gap:7.080px;margin-left:7px}
.quick svg,.apps svg,.tray svg{width:16px;height:16px}
.apps{display:flex;gap:3px;margin-left:44px}
.apps span{width:61px;padding-left:4px;gap:0}
.apps svg{margin-right:3px}
.apps .car{margin-left:1px}
.apps .cjk{font-family:"DejaVu Sans Condensed","Noto Sans CJK SC",sans-serif}
.apps .act{border-color:#404040 #fff #fff #404040;box-shadow:inset 1px 1px #808080;background:repeating-conic-gradient(#fff 0 25%,#d4d0c8 0 50%) 0 0/2px 2px;font-weight:700;letter-spacing:-.7px}
.tray{margin-left:auto;width:164px;height:22px;border:1px solid;border-color:#808080 #fff #fff #808080;display:flex;align-items:center;gap:1.800px;padding-left:4px}
.tray b{width:13px;font-size:13px;line-height:16px;padding-bottom:2px}
```
FILE: script.js
```js
const rows = `Components|Handlebars|2002|Q4|18,309.45
Components|Road Frames|2003|Q4|286,591.82
Accessories|Tires and Tubes|2003|Q3|41,940.34
Components|Mountain Frames|2003|Q2|440,260.98
Components|Road Frames|2003|Q2|457,688.84
Clothing|Vests|2003|Q4|66,882.65
Accessories|Pumps|2002|Q4|3,226.39
Clothing|Tights|2003|Q2|51,600.62
Components|Chains|2003|Q3|3,476.02
Components|Handlebars|2003|Q2|17,194.21
Components|Mountain Frames|2003|Q4|565,229.88
Clothing|Tights|2003|Q4|243.72
Components|Road Frames|2002|Q2|155,311.41
Components|Mountain Frames|2002|Q2|220,935.16
Accessories|Locks|2003|Q4|15.00
Components|Mountain Frames|2003|Q3|827,287.52
Accessories|Bike Racks|2003|Q3|75,920.40
Components|Bottom Brackets|2003|Q3|17,453.64
Bikes|Touring Bikes|2003|Q3|#
Components|Brakes|2003|Q4|18,571.47
Clothing|Tights|2002|Q4|56,782.43
Components|Pedals|2003|Q3|54,185.20
Clothing|Jerseys|2003|Q3|173,041.05
Clothing|Jerseys|2002|Q2|16,931.24
Components|Headsets|2002|Q3|19,701.90
Components|Road Frames|2002|Q4|458,089.42
Clothing|Shorts|2003|Q1|11,230.13
Bikes|Road Bikes|2002|Q4|#
Components|Brakes|2003|Q3|26,659.08
Components|Wheels|2003|Q4|83.30
Clothing|Vests|2003|Q3|81,085.69
Components|Cranksets|2003|Q3|80,244.14
Clothing|Socks|2003|Q4|6,183.14
Components|Wheels|2003|Q2|163,929.94
Clothing|Tights|2003|Q3|67,088.30
Clothing|Tights|2003|Q3|779.90
Clothing|Socks|2002|Q1|1,273.86
Bikes|Road Bikes|2002|Q3|#`.split('\n').map(r => r.split('|'));

document.getElementById('heads').innerHTML = '<span class="corner"></span>' +
  [...'ABCDEFGHIJKLMNOP'].map(c => `<span${c === 'I' ? ' class="sel"' : ''}>${c}</span>`).join('');

// Amounts under 1,000 take the red "bad" style; values too wide for the column show hashes.
const amount = v => v === '#'
  ? '<span class="c v hash">###########</span>'
  : `<span class="c v${v.length < 7 ? ' bad' : ''}"><i>$</i><i>${v}</i></span>`;

document.getElementById('rows').innerHTML = rows.map(([a, b, y, q, v], i) =>
  `<div><span class="n">${i + 16}</span><span class="c e">${a}</span><span class="c">${b}</span>` +
  `<span class="c y">${y}</span><span class="c q">${q}</span>${amount(v)}</div>`).join('');
```
